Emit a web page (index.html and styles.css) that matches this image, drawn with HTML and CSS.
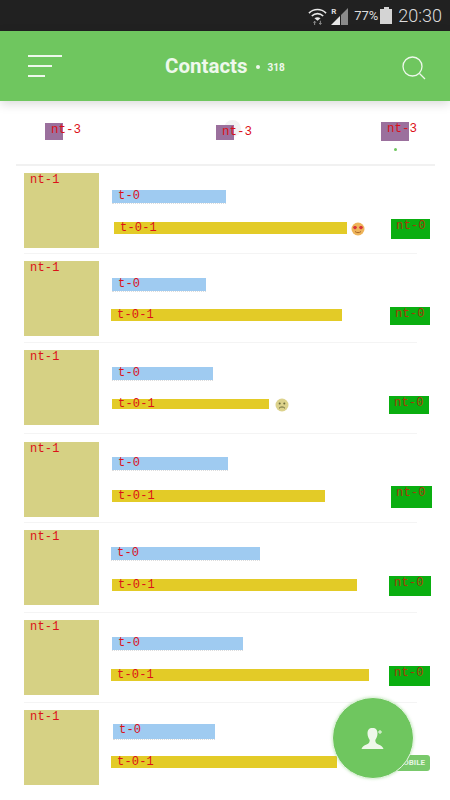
FILE: index.html
```html
<!DOCTYPE html>
<html lang="en">
<head>
  <meta charset="UTF-8" />
  <title>Contacts</title>
  <link rel="stylesheet" href="styles.css">
</head>
<body>
  <div class="page">
    <div class="statusbar">
      <svg class="icon-wifi" width="19" height="19" viewBox="0 0 20 20">
        <path d="M1 7.500C6 2.500 14 2.500 19 7.500" fill="none" stroke="#e8e8e8" stroke-width="1.700"/>
        <path d="M4 10.500C7.500 7.200 12.500 7.200 16 10.500" fill="none" stroke="#e8e8e8" stroke-width="1.700"/>
        <path d="M6.800 13C8.800 11.400 11.200 11.400 13.200 13L10 15.500Z" fill="#e8e8e8"/>
        <path d="M7 20V16.500M5.800 17.500L7 16L8.200 17.500M13 15.500V19M11.800 18L13 19.500L14.200 18" fill="none" stroke="#999" stroke-width="1"/>
      </svg>
      <div class="signal">
        <span class="roam">R</span>
        <svg width="18" height="17" viewBox="0 0 18 17">
          <path d="M0 17L9 8V17Z" fill="#e8e8e8"/>
          <path d="M10 7L17 0V17H10Z" fill="#8a8a8a"/>
        </svg>
      </div>
      <span class="battery-text">77%</span>
      <div class="battery"><div class="battery-cap"></div><div class="battery-body"></div></div>
      <span class="clock">20:30</span>
    </div>

    <div class="appbar">
      <div class="menu-icon"><span class="line-a"></span><span class="line-b"></span><span class="line-c"></span></div>
      <div class="title"><b>Contacts</b><i></i><small>318</small></div>
      <svg class="search-icon" width="26" height="26" viewBox="0 0 26 26">
        <circle cx="11.500" cy="11.500" r="9.500" fill="none" stroke="#eef8ec" stroke-width="1.300"/>
        <path d="M18.500 18.500L24 24" fill="none" stroke="#eef8ec" stroke-width="1.300"/>
      </svg>
    </div>

    <div class="tabs">
      <div class="tab tab-a"><div class="tab-box"></div><span class="label">nt-3</span></div>
      <div class="tab tab-b"><div class="tab-box"></div><span class="label">nt-3</span></div>
      <div class="tab tab-c"><div class="tab-box"></div><span class="label">nt-3</span><div class="tab-dot"></div></div>
    </div>

    <div class="contacts">
      <div class="contact">
        <div class="avatar">nt-1</div>
        <div class="info">
          <div class="name" style="width: 114px">t-0</div>
          <div class="meta">
            <div class="preview" style="width: 233px">t-0-1</div>
            <svg class="emoji" width="14" height="14" viewBox="0 0 14 14">
              <circle cx="7" cy="7" r="6.500" fill="#eeb45a"/>
              <path d="M2 5.500C2.500 3.500 5.500 3.500 6 5.500C5.600 6.700 4 7.500 4 7.500C4 7.500 2.400 6.700 2 5.500ZM8 5.500C8.500 3.500 11.500 3.500 12 5.500C11.600 6.700 10 7.500 10 7.500C10 7.500 8.400 6.700 8 5.500Z" fill="#d8343a"/>
              <path d="M4 9.500C5.500 11 8.500 11 10 9.500" fill="none" stroke="#a8682a" stroke-width="1"/>
            </svg>
            <div class="tag">nt-0</div>
          </div>
        </div>
      </div>

      <div class="contact">
        <div class="avatar">nt-1</div>
        <div class="info">
          <div class="name" style="width: 94px">t-0</div>
          <div class="meta">
            <div class="preview" style="width: 231px">t-0-1</div>
            <div class="tag">nt-0</div>
          </div>
        </div>
      </div>

      <div class="contact">
        <div class="avatar">nt-1</div>
        <div class="info">
          <div class="name" style="width: 101px">t-0</div>
          <div class="meta">
            <div class="preview" style="width: 157px">t-0-1</div>
            <svg class="emoji" width="14" height="14" viewBox="0 0 14 14">
              <circle cx="7" cy="7" r="6.500" fill="#dcd28c"/>
              <circle cx="4.700" cy="5.500" r="1" fill="#6a6a3c"/>
              <circle cx="9.300" cy="5.500" r="1" fill="#6a6a3c"/>
              <path d="M4 10.300C5.500 8.500 8.500 8.500 10 10.300" fill="none" stroke="#6a6a3c" stroke-width="1"/>
            </svg>
            <div class="tag">nt-0</div>
          </div>
        </div>
      </div>

      <div class="contact">
        <div class="avatar">nt-1</div>
        <div class="info">
          <div class="name" style="width: 116px">t-0</div>
          <div class="meta">
            <div class="preview" style="width: 213px">t-0-1</div>
            <div class="tag">nt-0</div>
          </div>
        </div>
      </div>

      <div class="contact">
        <div class="avatar">nt-1</div>
        <div class="info">
          <div class="name" style="width: 149px">t-0</div>
          <div class="meta">
            <div class="preview" style="width: 245px">t-0-1</div>
            <div class="tag">nt-0</div>
          </div>
        </div>
      </div>

      <div class="contact">
        <div class="avatar">nt-1</div>
        <div class="info">
          <div class="name" style="width: 131px">t-0</div>
          <div class="meta">
            <div class="preview" style="width: 258px">t-0-1</div>
            <div class="tag">nt-0</div>
          </div>
        </div>
      </div>

      <div class="contact">
        <div class="avatar">nt-1</div>
        <div class="info">
          <div class="name" style="width: 102px">t-0</div>
          <div class="meta">
            <div class="preview" style="width: 226px">t-0-1</div>
            <div class="badge">MOBILE</div>
          </div>
        </div>
      </div>
    </div>

    <div class="fab">
      <svg width="24" height="24" viewBox="0 0 24 24">
        <path d="M11.500 2C15 2 16.500 4 16.500 7.500C16.500 10.500 15.200 12.500 14.300 14C14.300 16 15 17.500 17.500 18.500C20 19.500 21.800 20.500 22.500 23H0.500C1.200 20.500 3 19.500 5.500 18.500C8 17.500 8.700 16 8.700 14C7.800 12.500 6.500 10.500 6.500 7.500C6.500 4 8 2 11.500 2Z" fill="#eef8ea"/>
        <path d="M19 4V8M17 6H21" fill="none" stroke="#eef8ea" stroke-width="1"/>
      </svg>
    </div>
  </div>
</body>
</html>
```

FILE: styles.css
```css
/* Contacts screen */
html, body {
  margin: 0;
  padding: 0;
}
body {
  font-family: Roboto, "Liberation Sans", sans-serif;
  background-color: #fff;
}
.page {
  position: relative;
  width: 450px;
  height: 800px;
  overflow: hidden;
  background-color: #fff;
}

/* status bar */
.statusbar {
  display: flex;
  align-items: center;
  justify-content: flex-end;
  height: 31px;
  padding-right: 8px;
  box-sizing: border-box;
  background-color: #212121;
  color: #dcdcdc;
}
.icon-wifi {
  margin-right: 4px;
}
.signal {
  display: flex;
  align-items: flex-end;
  height: 18px;
  margin-right: 5px;
}
.roam {
  width: 0;
  font-size: 8px;
  font-weight: bold;
  align-self: flex-start;
}
.battery-text {
  font-size: 13px;
  margin-right: 2px;
}
.battery {
  display: flex;
  flex-direction: column;
  align-items: center;
  margin-right: 6px;
}
.battery-cap {
  width: 5px;
  height: 2px;
  background-color: #d4d4d4;
}
.battery-body {
  width: 12px;
  height: 15px;
  background-color: #d4d4d4;
}
.clock {
  font-size: 18px;
  font-weight: 300;
}

/* green header */
.appbar {
  position: relative;
  z-index: 2;
  display: flex;
  align-items: center;
  height: 70px;
  padding: 0 23px 0 28px;
  background-color: #6fc65f;
  box-shadow: 0 3px 10px rgba(0, 0, 0, 0.15);
}
.menu-icon {
  display: flex;
  flex-direction: column;
  gap: 8px;
  width: 34px;
}
.menu-icon span {
  display: block;
  height: 2px;
  background-color: #eef8ec;
}
.line-a { width: 34px; }
.line-b { width: 24px; }
.line-c { width: 17px; }
.title {
  flex: 1;
  display: flex;
  align-items: center;
  margin-left: 103px;
  color: #eef8ec;
}
.title b {
  font-size: 20.5px;
  font-weight: 700;
}
.title i {
  width: 4px;
  height: 4px;
  margin: 2px 8px 0 8px;
  border-radius: 50%;
  background-color: #eef8ec;
}
.title small {
  font-size: 10px;
  font-weight: 700;
  margin-top: 3px;
}
.search-icon {
  margin-top: 3px;
}

/* debug labels */
.label, .avatar, .name, .preview, .tag {
  font-family: "Liberation Mono", monospace;
  font-size: 12px;
  letter-spacing: 0.2px;
  color: #dc1018;
}

/* tabs row */
.tabs {
  position: relative;
  height: 65px;
  margin: 0 15px 0 16px;
  border-bottom: 2px solid #f1f1f1;
  box-sizing: border-box;
}
.tab {
  position: absolute;
}
.tab .label {
  position: absolute;
  top: 0;
  left: 6px;
  white-space: nowrap;
  font-size: 12.5px;
  letter-spacing: 0;
}
.tab-box {
  position: relative;
  background-color: #9b709d;
}
.tab-a { left: 29px; top: 22px; }
.tab-a .tab-box { width: 18px; height: 17px; }
.tab-b { left: 200px; top: 24px; }
.tab-b .tab-box { width: 18px; height: 15px; }
.tab-b::before {
  content: "";
  position: absolute;
  left: 8px;
  top: -5px;
  width: 17px;
  height: 17px;
  border-radius: 50%;
  background-color: #f2f2f2;
}
.tab-c { left: 365px; top: 21px; }
.tab-c .tab-box { width: 28px; height: 19px; }
.tab-dot {
  width: 3px;
  height: 3px;
  margin: 7px 0 0 13px;
  border-radius: 50%;
  background-color: #6fc65f;
}

/* contact rows */
.contact {
  display: flex;
  align-items: flex-start;
  height: 88px;
  padding: 7px 20px 0 24px;
  box-sizing: border-box;
  background: linear-gradient(#f4f4f4, #f4f4f4) no-repeat 24px 100% / 393px 1px;
}
.contact:last-child {
  background: none;
}
.contact:nth-child(2) { height: 89px; }
.contact:nth-child(3) { height: 91px; }
.contact:nth-child(4) { height: 89px; padding-top: 8px; }
.contact:nth-child(5), .contact:nth-child(6) { height: 90px; }
.avatar {
  flex: none;
  width: 75px;
  height: 75px;
  padding-left: 6px;
  box-sizing: border-box;
  background-color: #d6d184;
}
.info {
  flex: 1;
  padding: 17px 0 0 13px;
}
.name {
  height: 14px;
  padding-left: 6px;
  line-height: 12px;
  background-color: #9fcbf1;
  background-clip: padding-box;
  border-bottom: 1px dotted #dcdcdc;
  box-sizing: border-box;
}
.meta {
  display: flex;
  align-items: center;
  margin-top: 15px;
}
.preview {
  height: 12px;
  margin-bottom: 2px;
  padding-left: 6px;
  box-sizing: border-box;
  line-height: 12px;
  background-color: #e3cb27;
}
.emoji {
  margin-left: 4px;
}
.tag {
  width: 39px;
  height: 20px;
  margin-left: auto;
  padding-left: 5px;
  box-sizing: border-box;
  line-height: 14px;
  background-color: #0aae10;
  color: #a83808;
}
.badge {
  margin-left: auto;
  width: 44px;
  height: 16px;
  border-radius: 3px;
  font-size: 8px;
  font-weight: 700;
  line-height: 16px;
  text-align: right;
  padding-right: 5px;
  box-sizing: border-box;
  color: #e6f5e2;
  background-color: #79c96b;
}

/* per row nudges */
.contact:nth-child(1) .preview { margin-left: 2px; }
.contact:nth-child(2) .preview { margin-left: -1px; }
.contact:nth-child(2) .tag { height: 18px; width: 40px; }
.contact:nth-child(3) .preview { height: 10px; line-height: 10px; }
.contact:nth-child(3) .emoji { margin-left: 6px; }
.contact:nth-child(3) .tag { height: 18px; margin-right: 1px; width: 40px; }
.contact:nth-child(4) .info { padding-top: 15px; }
.contact:nth-child(4) .tag { height: 22px; width: 41px; margin-right: -2px; }
.contact:nth-child(5) .name { margin-left: -1px; }
.contact:nth-child(5) .tag { width: 42px; margin-right: -1px; }
.contact:nth-child(6) .preview { margin-left: -1px; }
.contact:nth-child(6) .tag { width: 41px; }
.contact:nth-child(7) .info { padding-top: 14px; }
.contact:nth-child(7) .name { height: 16px; margin-left: 1px; }
.contact:nth-child(7) .preview { margin-left: -1px; }

/* floating add button */
.fab {
  position: absolute;
  left: 332px;
  top: 697px;
  display: flex;
  align-items: center;
  justify-content: center;
  width: 80px;
  height: 80px;
  border: 1px solid #eaf6e7;
  border-radius: 50%;
  background-color: #6fc65f;
  box-shadow: 0 0 3px rgba(111, 198, 95, 0.4);
}
```
